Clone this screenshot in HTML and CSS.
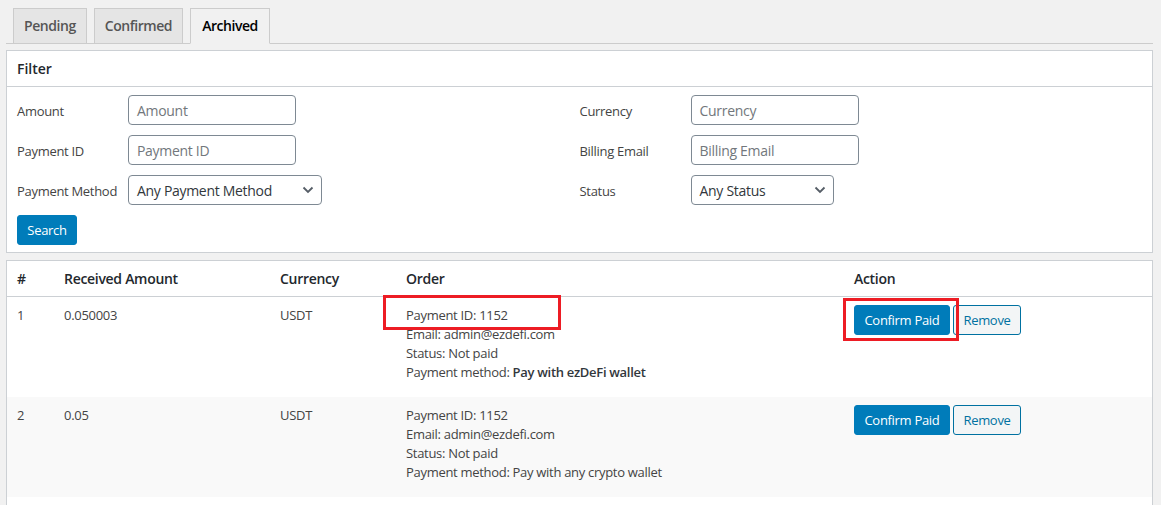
FILE: index.html
```html
<!DOCTYPE html>
<html>
<head>
<meta charset="utf-8">
<link rel="stylesheet" href="styles.css">
</head>
<body>
<div class="wrap">
  <nav class="tabs">
    <a class="tab">Pending</a>
    <a class="tab">Confirmed</a>
    <a class="tab active">Archived</a>
  </nav>

  <section class="box filter">
    <h2 class="box-head">Filter</h2>
    <div class="filter-body">
      <div class="grid">
        <div class="field"><label>Amount</label><span class="input">Amount</span></div>
        <div class="field"><label>Currency</label><span class="input">Currency</span></div>
        <div class="field"><label>Payment ID</label><span class="input">Payment ID</span></div>
        <div class="field"><label>Billing Email</label><span class="input">Billing Email</span></div>
        <div class="field"><label>Payment Method</label>
          <span class="select sel-method">Any Payment Method
            <svg width="12" height="8" viewBox="0 0 12 8"><path d="M1.5 1.5 6 6l4.5-4.5" fill="none" stroke="#555d66" stroke-width="1.8"/></svg>
          </span>
        </div>
        <div class="field"><label>Status</label>
          <span class="select sel-status">Any Status
            <svg width="12" height="8" viewBox="0 0 12 8"><path d="M1.5 1.5 6 6l4.5-4.5" fill="none" stroke="#555d66" stroke-width="1.8"/></svg>
          </span>
        </div>
      </div>
      <button class="btn primary search">Search</button>
    </div>
  </section>

  <section class="box list">
    <table>
      <thead>
        <tr>
          <th class="c1">#</th>
          <th class="c2">Received Amount</th>
          <th class="c3">Currency</th>
          <th class="c4">Order</th>
          <th class="c5">Action</th>
        </tr>
      </thead>
      <tbody>
        <tr>
          <td>1</td>
          <td>0.050003</td>
          <td>USDT</td>
          <td class="order">
            <span class="mark mark-id"></span>
            <div>Payment ID: 1152</div>
            <div>Email: admin@ezdefi.com</div>
            <div>Status: Not paid</div>
            <div>Payment method: <strong>Pay with ezDeFi wallet</strong></div>
          </td>
          <td class="actions">
            <span class="mark mark-btn"></span>
            <div class="btn-row">
              <button class="btn primary confirm">Confirm Paid</button>
              <button class="btn secondary remove">Remove</button>
            </div>
          </td>
        </tr>
        <tr class="alt">
          <td>2</td>
          <td>0.05</td>
          <td>USDT</td>
          <td class="order">
            <div>Payment ID: 1152</div>
            <div>Email: admin@ezdefi.com</div>
            <div>Status: Not paid</div>
            <div>Payment method: Pay with any crypto wallet</div>
          </td>
          <td class="actions">
            <div class="btn-row">
              <button class="btn primary confirm">Confirm Paid</button>
              <button class="btn secondary remove">Remove</button>
            </div>
          </td>
        </tr>
      </tbody>
    </table>
  </section>
</div>
</body>
</html>
```

FILE: styles.css
```css
* { box-sizing: border-box; }
html, body {
  margin: 0;
  background: #f1f1f1;
  font-family: "Open Sans", "Noto Sans", sans-serif;
  font-size: 13px;
  color: #444;
}
.wrap {
  width: 1147px;
  margin-left: 6px;
  padding-top: 8px;
}
.tabs {
  display: flex;
  gap: 7px;
  padding-left: 7px;
  border-bottom: 1px solid #ccc;
  height: 36px;
}
.tab {
  display: block;
  height: 36px;
  padding: 0 10px;
  line-height: 34px;
  font-size: 14px;
  font-weight: 600;
  color: #555;
  background: #e5e5e5;
  border: 1px solid #ccc;
  letter-spacing: -0.45px;
}
.tab.active {
  background: #f1f1f1;
  color: #000;
  border-bottom-color: #f1f1f1;
  padding: 0 11px;
}
.box {
  background: #fff;
  border: 1px solid #ccd0d4;
}
.filter { margin-top: 6px; }
.list { margin-top: 7px; height: 260px; border-bottom: none; }
.box-head {
  margin: 0;
  font-size: 14px;
  font-weight: 600;
  color: #23282d;
  padding: 0 10px;
  height: 36px;
  line-height: 36px;
  border-bottom: 1px solid #ccd0d4;
}
.filter-body {
  padding: 8px 10px 7px;
}
.grid {
  display: grid;
  grid-template-columns: 1fr 1fr;
  row-gap: 10px;
}
.field {
  display: flex;
  align-items: center;
  height: 30px;
}
.field label {
  width: 111px;
  flex: none;
  letter-spacing: -0.3px;
  padding-top: 2px;
}
.input, .select {
  display: flex;
  align-items: center;
  height: 30px;
  border: 1px solid #7e8993;
  border-radius: 4px;
  padding: 0 8px;
  font-size: 14px;
  letter-spacing: -0.3px;
  background: #fff;
}
.input { width: 168px; color: #72777c; }
.select { justify-content: space-between; color: #32373c; padding-right: 7px; }
.sel-method { width: 194px; }
.sel-status { width: 143px; }
.btn {
  font-family: inherit;
  font-size: 13px;
  height: 30px;
  border-radius: 3px;
  padding: 0;
  letter-spacing: -0.3px;
  cursor: pointer;
}
.primary {
  background: #007cba;
  border: 1px solid #007cba;
  color: #fff;
}
.secondary {
  background: #f3f5f6;
  border: 1px solid #0071a1;
  color: #0071a1;
}
.search { margin-top: 10px; width: 60px; }
.btn-row { display: flex; gap: 3px; }
.confirm { width: 96px; }
.remove { width: 68px; }
table {
  width: 100%;
  border-collapse: collapse;
  table-layout: fixed;
}
th {
  text-align: left;
  font-size: 14px;
  font-weight: 600;
  color: #23282d;
  padding: 0 10px;
  height: 35px;
  line-height: 19px;
  border-bottom: 1px solid #ccd0d4;
  letter-spacing: -0.3px;
}
.c1 { width: 47px; }
.c2 { width: 216px; }
.c3 { width: 126px; }
.c4 { width: 448px; }
td {
  vertical-align: top;
  padding: 9px 10px 15px;
  line-height: 19px;
  letter-spacing: -0.3px;
}
tr.alt td { background: #f9f9f9; }
.order, .actions { position: relative; }
.order strong { font-weight: 600; color: #32373c; }
.actions { padding-top: 8px; }
.mark {
  position: absolute;
  border: 3px solid #ed1c24;
  pointer-events: none;
}
.mark-id { left: -13px; top: -2px; width: 178px; height: 35px; }
.mark-btn { left: -1px; top: 1px; width: 116px; height: 43px; }
```
